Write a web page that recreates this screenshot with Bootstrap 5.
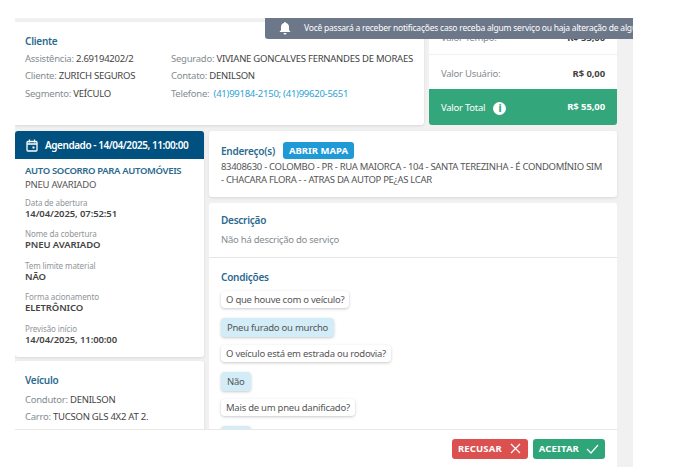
<!DOCTYPE html>
<html lang="pt-BR"><head><meta charset="utf-8"><title>Serviço</title>
<link href="https://cdn.jsdelivr.net/npm/bootstrap@5.3.0/dist/css/bootstrap.min.css" rel="stylesheet">
<style>
html,body{height:469px;overflow:hidden;background:#fff}
body{font-family:"Noto Sans","Open Sans",sans-serif;font-size:9.5px;color:#444;line-height:1.2;letter-spacing:-.25px}
.shell{position:relative;width:618px;height:449px;margin:18px 0 0 15px;background:#f1f1f1;overflow:hidden;display:flex;flex-direction:column}
.scrollzone{height:411px;overflow:hidden;flex:none;padding-top:4px}
.toprow{display:flex;gap:5px;height:103px;width:602px}
.pane{background:#fff;border-radius:3px;box-shadow:0 1px 3px rgba(0,0,0,.1)}
.clientbox{width:409px;padding:13px 10px 0 10px;border-radius:0 0 3px 0}
.clienthead{margin-bottom:3px}
.heading{color:#2b6a8f;font-weight:600;font-size:10px}
.lbl{color:#858c91}
.val{color:#444}
.tel{color:#2e9fd0;margin-left:2px}
.linegap{height:17.3px;line-height:17.3px;white-space:nowrap}
.clientcol{width:146px;flex:none}
.valcol{width:188px;display:flex;flex-direction:column;gap:1px}
.valrow{display:flex;justify-content:space-between;align-items:center;padding:0 12px;background:#fff;color:#858c91}
.valrow b{color:#444;font-weight:700;letter-spacing:-.1px}
.vr1{height:33px}
.vr2{height:34px;padding-top:3px}
.vrtotal{height:37px;background:#34a67c;color:#fff;border-radius:0 0 3px 3px;margin-top:-1px;padding-top:3px}
.vrtotal b{color:#fff;margin-top:-4px}
.mainrow{display:flex;gap:5px;width:602px;margin-top:6px}
.leftcol{width:189px;display:flex;flex-direction:column;gap:4px}
.rightcol{width:408px;display:flex;flex-direction:column;gap:6px}
.schedhead{height:28px;background:#00517f;color:#fff;font-weight:600;font-size:10px;letter-spacing:-.45px;display:flex;align-items:center;gap:7px;padding-left:11px;border-radius:3px 3px 0 0}
.schedbody{padding:5px 10px 0;height:198px}
.smalllbl{color:#8f9599;font-size:8px;margin-top:9.5px;line-height:10px;letter-spacing:-.1px}
.boldval{font-weight:600;color:#444;font-size:9.5px;line-height:12px;letter-spacing:-.1px}
.titlelink{color:#2b6a8f;font-weight:600;line-height:13px;letter-spacing:-.35px;white-space:nowrap}
.plainval{line-height:16px;color:#555}
.schedbody .plainval + .smalllbl{margin-top:4.5px}
.vehbox{padding:13px 10px 0;height:120px}
.vehhead{margin-bottom:5px}
.addrbox{height:66px;padding:11px 12px 0}
.mapbtn{background:#1f9ad6;color:#fff;font-weight:700;font-size:9.5px;border:0;border-radius:3px;padding:0 6px;height:17px;line-height:17px;letter-spacing:0}
.addrtext{line-height:12.5px;margin-top:2px;color:#555;letter-spacing:-.31px;white-space:nowrap}
.descbox{padding:11px 12px 0;height:55px;border-bottom:1px solid #e6e6e6;border-radius:3px 3px 0 0;box-shadow:none}
.muted2{color:#858c91;margin-top:8px}
.condbox{padding:13px 12px 0;height:200px;margin-top:-6px;box-shadow:none;border-radius:0}
.chip{display:table;background:#fff;border-radius:4px;box-shadow:0 1px 3px rgba(0,0,0,.22);padding:0 5px;height:17px;line-height:17px;margin-bottom:10px;color:#555}
.chipon{background:#d3edf8;height:19px;line-height:19px;padding:0 6px;margin-bottom:8px}
.footbar{height:38px;background:#fff;border-top:1px solid #e8e8e8;display:flex;justify-content:flex-end;align-items:center;gap:5px;padding:0 12px 0 0;width:602px;flex:none}
.actbtn{height:20px;border:0;border-radius:3px;color:#fff;font-weight:700;font-size:9.5px;padding:0 6px;display:flex;align-items:center;gap:7px;letter-spacing:.15px}
.refuse{background:#dd5050}
.accept{background:#2fa57a}
.toast2{position:absolute;left:250px;top:0;width:368px;height:21px;background:#6c7889;color:#fff;border-radius:0 0 0 3px;display:flex;align-items:center;gap:13px;padding-left:14px;font-size:8.5px;letter-spacing:-.22px;white-space:nowrap;overflow:hidden}
.toast2 svg{flex:none}
.iinfo{width:13px;height:13px;border-radius:50%;background:#fff;color:#34a67c;font-weight:800;font-size:10px;display:inline-flex;align-items:center;justify-content:center;margin-left:6px;vertical-align:middle}
</style></head><body>
<div class="shell">
 <div class="toast2">
  <svg width="12" height="13" viewBox="0 0 12 13"><path d="M6 0a1 1 0 0 1 1 1.100C9 1.600 10 3.200 10 5v3l1.500 2H.5L2 8V5c0-1.800 1-3.400 3-3.900A1 1 0 0 1 6 0zM4.500 11h3a1.500 1.500 0 0 1-3 0z" fill="#fff"/></svg>
  <span>Você passará a receber notificações caso receba algum serviço ou haja alteração de algum serviço já</span>
 </div>
 <div class="scrollzone">
  <div class="toprow">
   <div class="pane clientbox">
    <div class="heading clienthead">Cliente</div>
    <div class="d-flex">
     <div class="clientcol">
      <div class="linegap"><span class="lbl">Assistência:</span> <span class="val">2.69194202/2</span></div>
      <div class="linegap"><span class="lbl">Cliente:</span> <span class="val">ZURICH SEGUROS</span></div>
      <div class="linegap"><span class="lbl">Segmento:</span> <span class="val">VEÍCULO</span></div>
     </div>
     <div>
      <div class="linegap"><span class="lbl">Segurado:</span> <span class="val">VIVIANE GONCALVES FERNANDES DE MORAES</span></div>
      <div class="linegap"><span class="lbl">Contato:</span> <span class="val">DENILSON</span></div>
      <div class="linegap"><span class="lbl">Telefone:</span> <span class="tel">(41)99184-2150; (41)99620-5651</span></div>
     </div>
    </div>
   </div>
   <div class="valcol">
    <div class="valrow vr1"><span>Valor Tempo:</span><b>R$ 55,00</b></div>
    <div class="valrow vr2"><span>Valor Usuário:</span><b>R$ 0,00</b></div>
    <div class="valrow vrtotal"><span>Valor Total <span class="iinfo">i</span></span><b>R$ 55,00</b></div>
   </div>
  </div>
  <div class="mainrow">
   <div class="leftcol">
    <div class="pane">
     <div class="schedhead">
      <svg width="12" height="13" viewBox="0 0 12 13" fill="none" stroke="#fff" stroke-width="1.300"><rect x="1" y="2.500" width="10" height="9.500" rx="1"/><path d="M1 5h10M3.500 .5v3M8.500 .5v3"/><rect x="6.500" y="7.500" width="2" height="2" fill="#fff" stroke="none"/></svg>
      <span>Agendado - 14/04/2025, 11:00:00</span>
     </div>
     <div class="schedbody">
      <div class="titlelink">AUTO SOCORRO PARA AUTOMÓVEIS</div>
      <div class="plainval">PNEU AVARIADO</div>
      <div class="smalllbl">Data de abertura</div><div class="boldval">14/04/2025, 07:52:51</div>
      <div class="smalllbl">Nome da cobertura</div><div class="boldval">PNEU AVARIADO</div>
      <div class="smalllbl">Tem limite material</div><div class="boldval">NÃO</div>
      <div class="smalllbl">Forma acionamento</div><div class="boldval">ELETRÔNICO</div>
      <div class="smalllbl">Previsão início</div><div class="boldval">14/04/2025, 11:00:00</div>
     </div>
    </div>
    <div class="pane vehbox">
     <div class="heading vehhead">Veículo</div>
     <div class="linegap"><span class="lbl">Condutor:</span> DENILSON</div>
     <div class="linegap"><span class="lbl">Carro:</span> TUCSON GLS 4X2 AT 2.</div>
    </div>
   </div>
   <div class="rightcol">
    <div class="pane addrbox">
     <div class="d-flex align-items-center gap-2"><span class="heading">Endereço(s)</span><button class="mapbtn">ABRIR MAPA</button></div>
     <div class="addrtext">83408630 - COLOMBO - PR - RUA MAIORCA - 104 - SANTA TEREZINHA - É CONDOMÍNIO SIM<br>- CHACARA FLORA - - ATRAS DA AUTOP PE¿AS LCAR</div>
    </div>
    <div class="pane descbox">
     <div class="heading">Descrição</div>
     <div class="muted2">Não há descrição do serviço</div>
    </div>
    <div class="pane condbox">
     <div class="heading mb-2">Condições</div>
     <div class="chip">O que houve com o veículo?</div>
     <div class="chip chipon">Pneu furado ou murcho</div>
     <div class="chip">O veículo está em estrada ou rodovia?</div>
     <div class="chip chipon">Não</div>
     <div class="chip">Mais de um pneu danificado?</div>
     <div class="chip chipon">Não</div>
    </div>
   </div>
  </div>
 </div>
 <div class="footbar">
  <button class="actbtn refuse">RECUSAR <svg width="13" height="11" viewBox="0 0 13 11" stroke="#fff" stroke-width="1.200"><path d="M2 1l9 9M11 1l-9 9"/></svg></button>
  <button class="actbtn accept">ACEITAR <svg width="13" height="10" viewBox="0 0 13 10" fill="none" stroke="#fff" stroke-width="1.200"><path d="M1 5l4 4 7-8"/></svg></button>
 </div>
</div>
</body></html>
